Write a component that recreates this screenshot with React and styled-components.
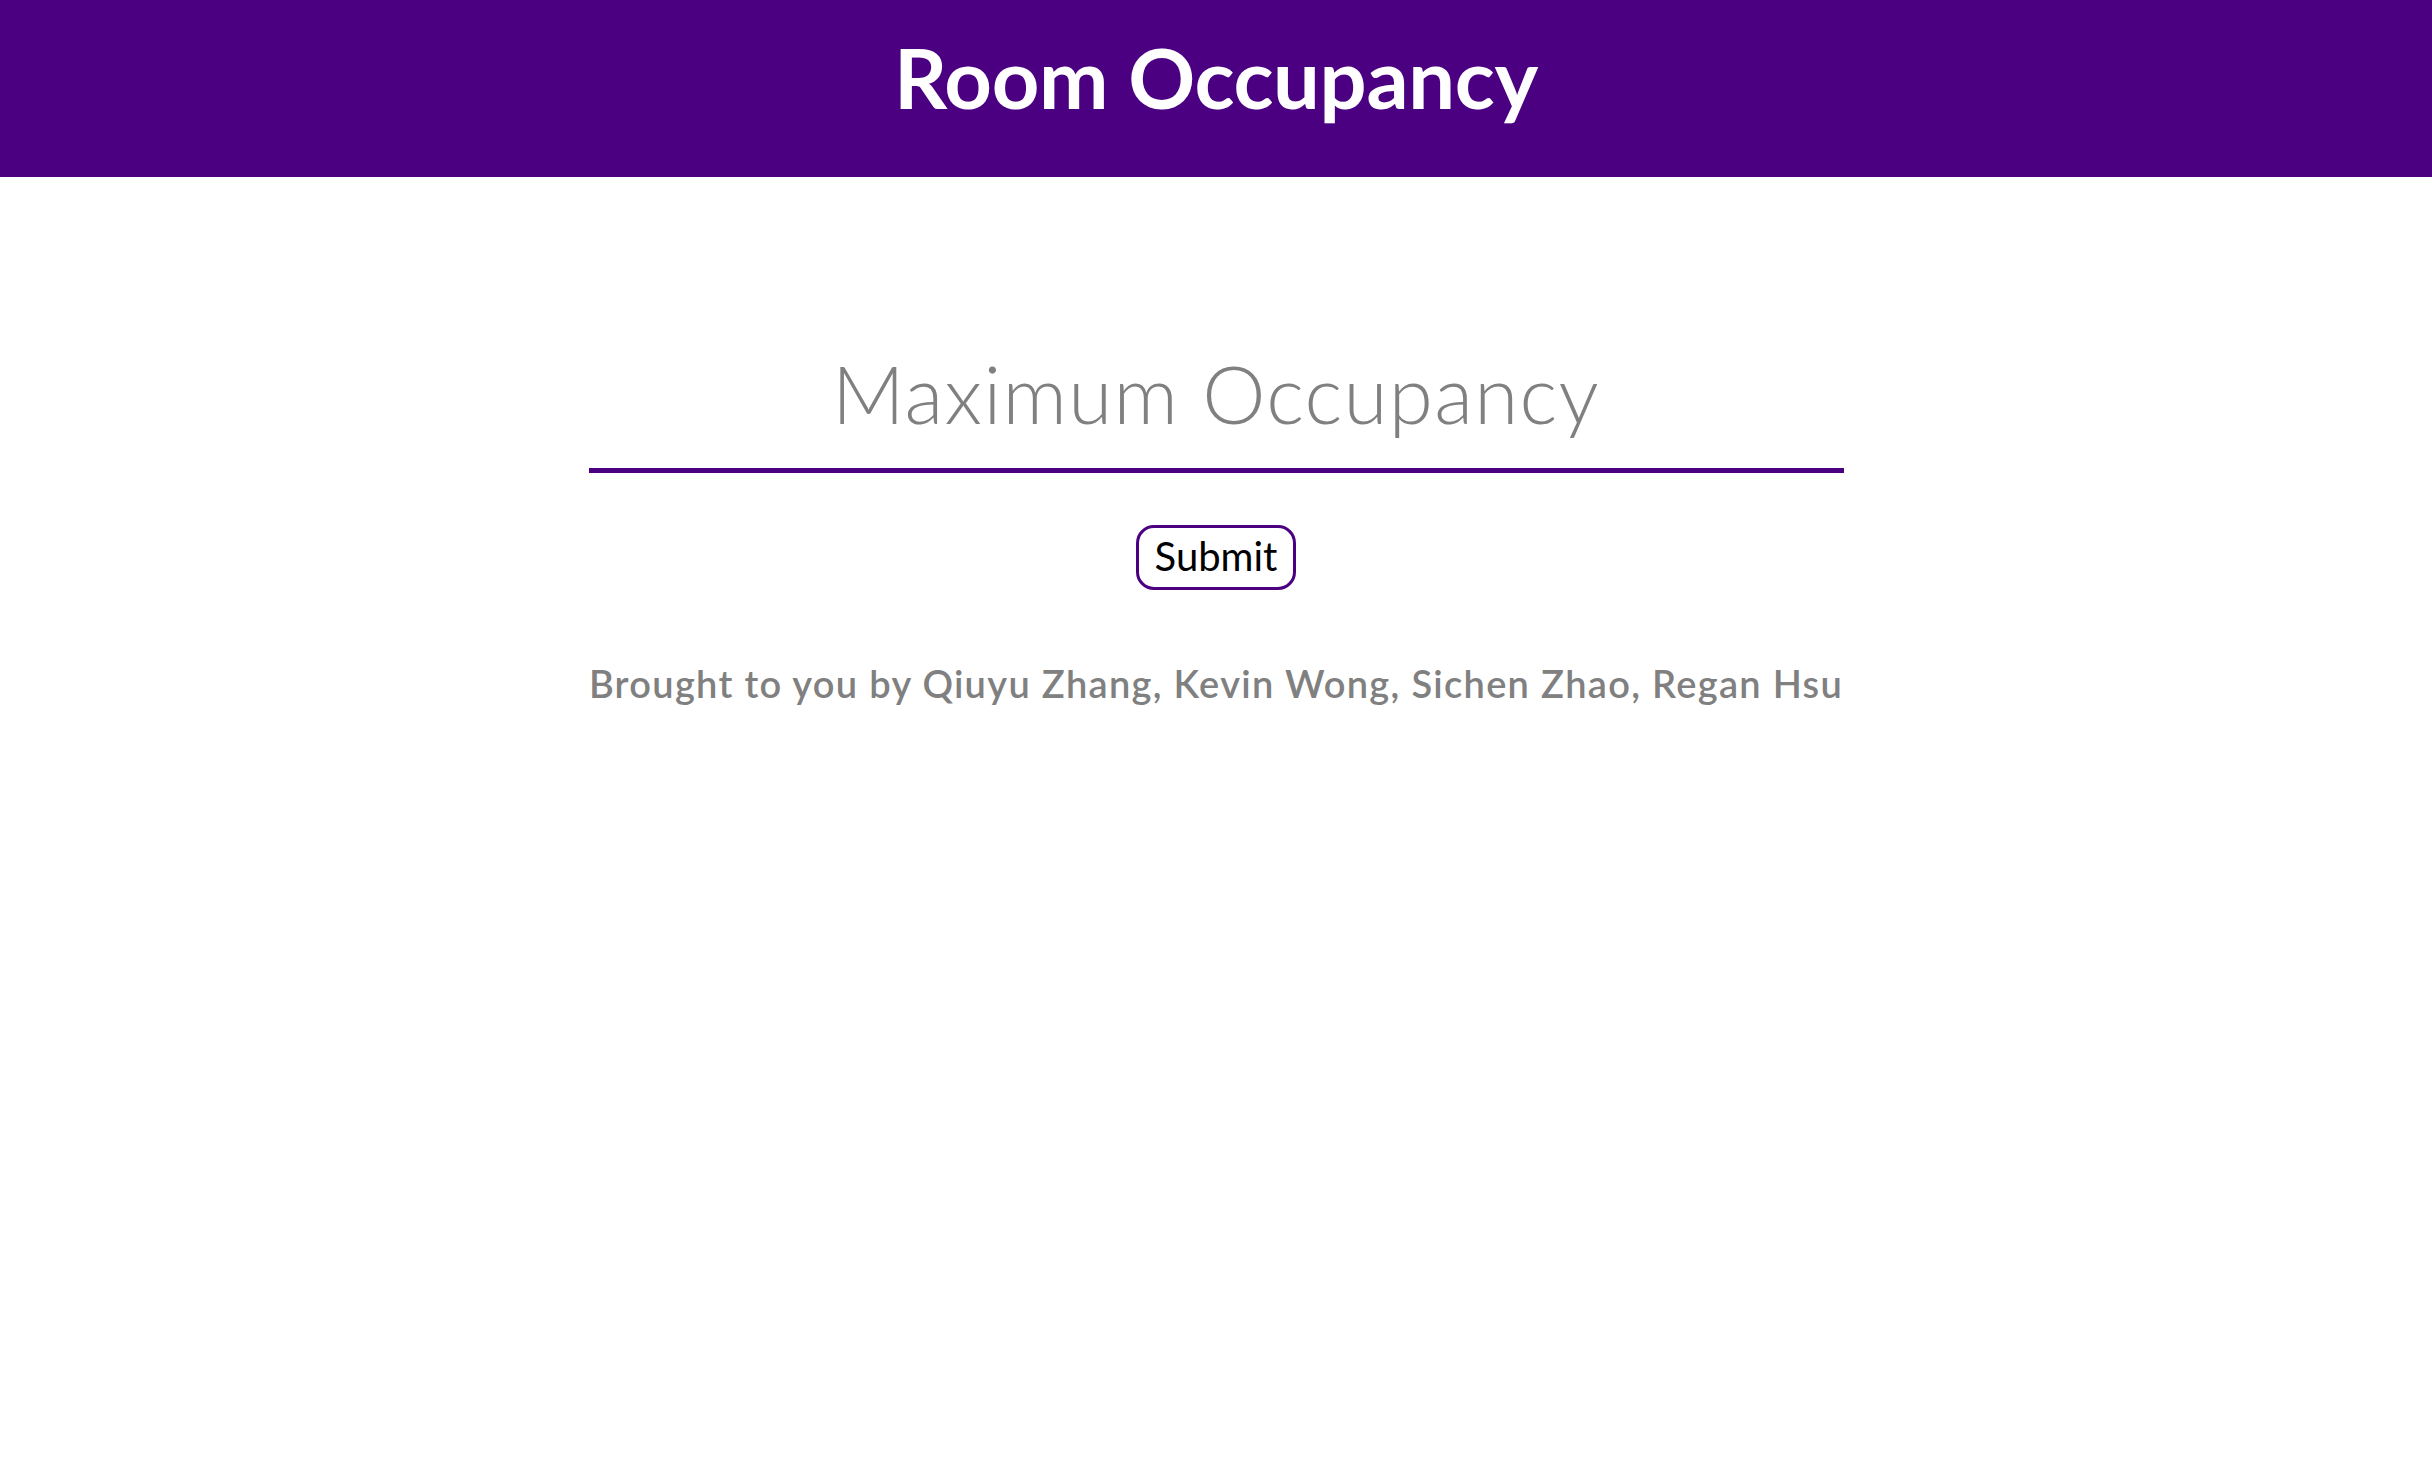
import React, { useState } from "react";
import styled, { createGlobalStyle } from "styled-components";

const GlobalStyle = createGlobalStyle`
  body {
    margin: 0;
    background: #ffffff;
    font-family: Lato, "Liberation Sans", sans-serif;
  }
`;

const Header = styled.header`
  height: 177px;
  box-sizing: border-box;
  padding-top: 28px;
  background: #4b0082;
  text-align: center;
`;

const Title = styled.h1`
  margin: 0;
  font-size: 83px;
  font-weight: 700;
  line-height: 1.2;
  letter-spacing: -0.3px;
  color: #ffffff;
`;

const Main = styled.main`
  display: flex;
  flex-direction: column;
  align-items: center;
  padding-top: 168px;
`;

const Form = styled.form`
  display: flex;
  flex-direction: column;
  align-items: center;
`;

const OccupancyInput = styled.input`
  width: 1255px;
  box-sizing: border-box;
  padding: 0 0 27px;
  border: none;
  border-bottom: 5px solid #4b0082;
  outline: none;
  font-family: Lato, "Liberation Sans", sans-serif;
  font-size: 80px;
  font-weight: 300;
  line-height: 96px;
  letter-spacing: 1.3px;
  height: 128px;
  text-align: center;
  color: #444;

  &::placeholder {
    color: #808080;
  }
`;

const SubmitButton = styled.button`
  margin-top: 52px;
  width: 160px;
  height: 65px;
  box-sizing: border-box;
  padding: 0 0 4px;
  border: 3px solid #4b0082;
  border-radius: 18px;
  background: #ffffff;
  font-family: Lato, "Liberation Sans", sans-serif;
  font-size: 40px;
  font-weight: 400;
  color: #000000;
  cursor: pointer;
`;

const Credits = styled.p`
  margin: 71px 0 0;
  font-size: 38px;
  font-weight: 600;
  line-height: 1.2;
  letter-spacing: 1.3px;
  color: #808080;
`;

const App = () => {
  const [value, setValue] = useState("");

  return (
    <>
      <GlobalStyle />
      <Header>
        <Title>Room Occupancy</Title>
      </Header>
      <Main>
        <Form onSubmit={(e) => e.preventDefault()}>
          <OccupancyInput
            type="text"
            placeholder="Maximum Occupancy"
            value={value}
            onChange={(e) => setValue(e.target.value)}
          />
          <SubmitButton type="submit">Submit</SubmitButton>
        </Form>
        <Credits>
          Brought to you by Qiuyu Zhang, Kevin Wong, Sichen Zhao, Regan Hsu
        </Credits>
      </Main>
    </>
  );
};

export default App;
